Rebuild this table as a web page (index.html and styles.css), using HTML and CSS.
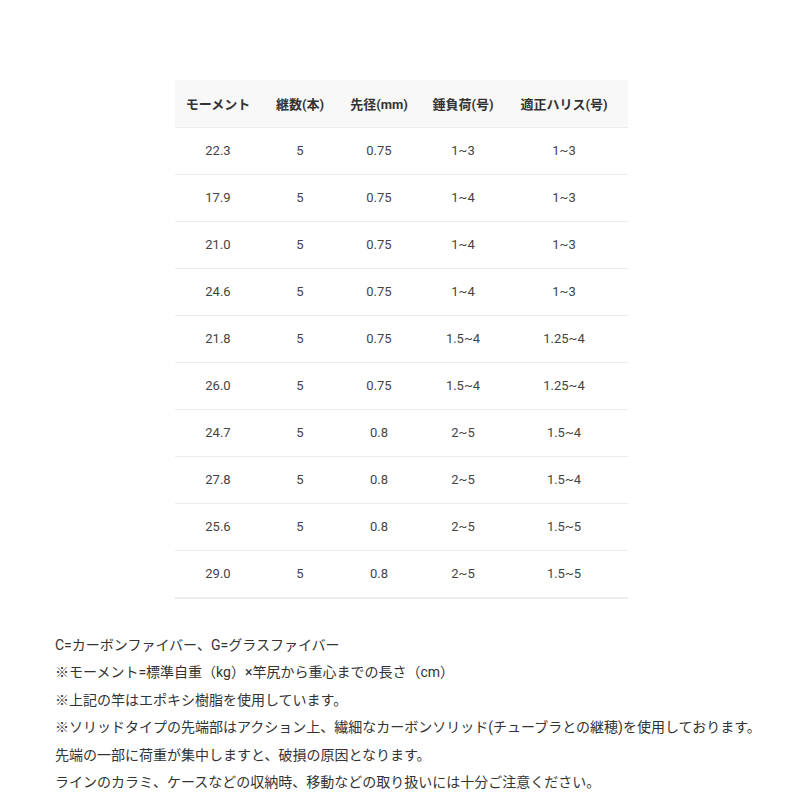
FILE: index.html
```html
<!DOCTYPE html>
<html lang="ja">
<head>
<meta charset="utf-8">
<link rel="stylesheet" href="styles.css">
</head>
<body>
<div class="page">
  <table class="spec">
    <colgroup>
      <col class="c1"><col class="c2"><col class="c3"><col class="c4"><col class="c5">
    </colgroup>
    <thead>
      <tr><th>モーメント</th><th>継数(本)</th><th>先径(mm)</th><th>錘負荷(号)</th><th>適正ハリス(号)</th></tr>
    </thead>
    <tbody>
      <tr><td>22.3</td><td>5</td><td>0.75</td><td>1~3</td><td>1~3</td></tr>
      <tr><td>17.9</td><td>5</td><td>0.75</td><td>1~4</td><td>1~3</td></tr>
      <tr><td>21.0</td><td>5</td><td>0.75</td><td>1~4</td><td>1~3</td></tr>
      <tr><td>24.6</td><td>5</td><td>0.75</td><td>1~4</td><td>1~3</td></tr>
      <tr><td>21.8</td><td>5</td><td>0.75</td><td>1.5~4</td><td>1.25~4</td></tr>
      <tr><td>26.0</td><td>5</td><td>0.75</td><td>1.5~4</td><td>1.25~4</td></tr>
      <tr><td>24.7</td><td>5</td><td>0.8</td><td>2~5</td><td>1.5~4</td></tr>
      <tr><td>27.8</td><td>5</td><td>0.8</td><td>2~5</td><td>1.5~4</td></tr>
      <tr><td>25.6</td><td>5</td><td>0.8</td><td>2~5</td><td>1.5~5</td></tr>
      <tr><td>29.0</td><td>5</td><td>0.8</td><td>2~5</td><td>1.5~5</td></tr>
    </tbody>
  </table>
  <div class="notes">
    <p>C=カーボンファイバー、G=グラスファイバー</p>
    <p>※モーメント=標準自重（kg）×竿尻から重心までの長さ（cm）</p>
    <p>※上記の竿はエポキシ樹脂を使用しています。</p>
    <p>※ソリッドタイプの先端部はアクション上、繊細なカーボンソリッド(チューブラとの継穂)を使用しております。</p>
    <p>先端の一部に荷重が集中しますと、破損の原因となります。</p>
    <p>ラインのカラミ、ケースなどの収納時、移動などの取り扱いには十分ご注意ください。</p>
  </div>
</div>
</body>
</html>
```
FILE: styles.css
```css
html, body {
  margin: 0;
  padding: 0;
  background: #fff;
}
body {
  font-family: Roboto, "Noto Sans CJK JP", sans-serif;
  color: #333;
}
.page {
  padding: 80px 0 0 55px;
}
.spec {
  border-collapse: collapse;
  margin-left: 120px;
  width: 453px;
  table-layout: fixed;
  font-size: 13px;
}
.c1 { width: 86px; }
.c2 { width: 78px; }
.c3 { width: 80px; }
.c4 { width: 88px; }
.c5 { width: 121px; }
.spec th, .spec td {
  height: 46px;
  padding: 0;
  text-align: center;
  vertical-align: middle;
  border-bottom: 1px solid #ececec;
}
.spec th:last-child, .spec td:last-child {
  padding-right: 7px;
}
.spec tr {
  height: 47px;
}
.spec th {
  background: #f8f8f8;
  font-weight: 700;
  color: #333;
}
.spec td {
  color: #444;
}
.spec tbody tr:last-child td {
  border-bottom: 2px solid #ececec;
}
.notes {
  margin-top: 33px;
  font-size: 14px;
  color: #333;
}
.notes p {
  margin: 0;
  line-height: 27.6px;
}
```
